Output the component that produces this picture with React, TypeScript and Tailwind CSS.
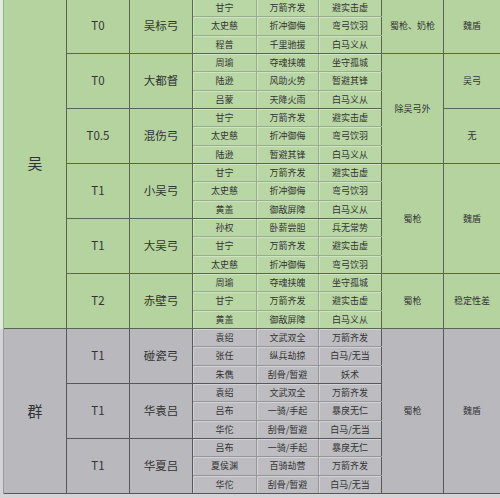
type Row = [string, string, string];
type Group = { tier: string; name: string; rows: Row[] };
type Note = { h: string; a: string; b: string[] };
type Theme = {
  bg: string;
  cell: string;
  strip: string;
  line: string;
  soft: string;
};

const wuGroups: Group[] = [
  {
    tier: "T0",
    name: "吴标弓",
    rows: [
      ["甘宁", "万箭齐发", "避实击虚"],
      ["太史慈", "折冲御侮", "弯弓饮羽"],
      ["程普", "千里驰援", "白马义从"],
    ],
  },
  {
    tier: "T0",
    name: "大都督",
    rows: [
      ["周瑜", "夺魂挟魄", "坐守孤城"],
      ["陆逊", "风助火势", "暂避其锋"],
      ["吕蒙", "天降火雨", "白马义从"],
    ],
  },
  {
    tier: "T0.5",
    name: "混伤弓",
    rows: [
      ["甘宁", "万箭齐发", "避实击虚"],
      ["太史慈", "折冲御侮", "弯弓饮羽"],
      ["陆逊", "暂避其锋", "白马义从"],
    ],
  },
  {
    tier: "T1",
    name: "小吴弓",
    rows: [
      ["甘宁", "万箭齐发", "避实击虚"],
      ["太史慈", "折冲御侮", "弯弓饮羽"],
      ["黄盖", "御敌屏障", "白马义从"],
    ],
  },
  {
    tier: "T1",
    name: "大吴弓",
    rows: [
      ["孙权", "卧薪尝胆", "兵无常势"],
      ["甘宁", "万箭齐发", "避实击虚"],
      ["太史慈", "折冲御侮", "弯弓饮羽"],
    ],
  },
  {
    tier: "T2",
    name: "赤壁弓",
    rows: [
      ["周瑜", "夺魂挟魄", "坐守孤城"],
      ["甘宁", "万箭齐发", "避实击虚"],
      ["黄盖", "御敌屏障", "白马义从"],
    ],
  },
];

const qunGroups: Group[] = [
  {
    tier: "T1",
    name: "碰瓷弓",
    rows: [
      ["袁绍", "文武双全", "万箭齐发"],
      ["张任", "纵兵劫掠", "白马/无当"],
      ["朱儁", "刮骨/暂避", "妖术"],
    ],
  },
  {
    tier: "T1",
    name: "华袁吕",
    rows: [
      ["袁绍", "文武双全", "万箭齐发"],
      ["吕布", "一骑/手起", "暴戾无仁"],
      ["华佗", "刮骨/暂避", "白马/无当"],
    ],
  },
  {
    tier: "T1",
    name: "华夏吕",
    rows: [
      ["吕布", "一骑/手起", "暴戾无仁"],
      ["夏侯渊", "百骑劫营", "万箭齐发"],
      ["华佗", "刮骨/暂避", "白马/无当"],
    ],
  },
];

const wuNotes: Note[] = [
  { h: "h-[55px]", a: "蜀枪、奶枪", b: ["魏盾"] },
  { h: "h-[110px]", a: "除吴弓外", b: ["吴弓", "无"] },
  { h: "h-[110px]", a: "蜀枪", b: ["魏盾"] },
  { h: "h-[55px]", a: "蜀枪", b: ["稳定性差"] },
];

const qunNotes: Note[] = [{ h: "h-[165px]", a: "蜀枪", b: ["魏盾"] }];

const green: Theme = {
  bg: "bg-[#b4d39f]",
  cell: "bg-[#b9d7a5] shadow-[inset_1px_1px_0_#cfe4c0]",
  strip: "bg-[#e2ebd9] border-[#9cab93]",
  line: "border-[#5a6653]",
  soft: "border-[#98ad8e]",
};

const gray: Theme = {
  bg: "bg-[#b9b9bd]",
  cell: "bg-[#bdbdc1] shadow-[inset_1px_1px_0_#d3d3d6]",
  strip: "bg-[#d3d3d5] border-[#9a9a9e]",
  line: "border-[#58585c]",
  soft: "border-[#96969a]",
};

function Section({
  faction,
  groups,
  notes,
  t,
}: {
  faction: string;
  groups: Group[];
  notes: Note[];
  t: Theme;
}) {
  return (
    <div className={`flex ${t.bg}`}>
      <div className={`w-[4px] shrink-0 border-r ${t.strip}`} />
      <div
        className={`flex w-[63px] shrink-0 items-center justify-center border-r border-b text-[15px] ${t.line}`}
      >
        {faction}
      </div>
      <div className="flex w-[315px] shrink-0 flex-col">
        {groups.map((g, gi) => (
          <div key={gi} className={`flex h-[55px] border-b ${t.line}`}>
            <div
              className={`flex w-[63px] items-center justify-center border-r text-[11.5px] ${t.line}`}
            >
              {g.tier}
            </div>
            <div
              className={`flex w-[63px] items-center justify-center border-r text-[11.5px] ${t.line}`}
            >
              {g.name}
            </div>
            <div className="flex flex-1 flex-col">
              {g.rows.map((r, i) => (
                <div
                  key={i}
                  className={`flex flex-1 text-[9px] ${i < 2 ? `border-b ${t.soft}` : ""}`}
                >
                  <div
                    className={`flex w-[64px] items-center justify-center border-r ${t.cell} ${t.soft}`}
                  >
                    {r[0]}
                  </div>
                  <div
                    className={`flex w-[62px] items-center justify-center border-r ${t.cell} ${t.soft}`}
                  >
                    {r[1]}
                  </div>
                  <div
                    className={`flex flex-1 items-center justify-center border-r ${t.cell} ${t.line}`}
                  >
                    {r[2]}
                  </div>
                </div>
              ))}
            </div>
          </div>
        ))}
      </div>
      <div className="flex flex-1 flex-col text-[9px]">
        {notes.map((n, ni) => (
          <div key={ni} className={`flex border-b ${n.h} ${t.line}`}>
            <div
              className={`flex w-[62px] items-center justify-center border-r ${t.line}`}
            >
              {n.a}
            </div>
            <div className="flex flex-1 flex-col">
              {n.b.map((s, si) => (
                <div
                  key={si}
                  className={`flex flex-1 items-center justify-center ${
                    si < n.b.length - 1 ? `border-b ${t.line}` : ""
                  }`}
                >
                  {s}
                </div>
              ))}
            </div>
          </div>
        ))}
      </div>
    </div>
  );
}

export default function App() {
  return (
    <div className="h-[498px] w-[500px] overflow-hidden bg-[#d4d4d6] font-['Noto_Sans_CJK_SC',sans-serif] text-[#333333]">
      <div className="-mt-px">
        <Section faction="吴" groups={wuGroups} notes={wuNotes} t={green} />
        <Section faction="群" groups={qunGroups} notes={qunNotes} t={gray} />
      </div>
    </div>
  );
}
